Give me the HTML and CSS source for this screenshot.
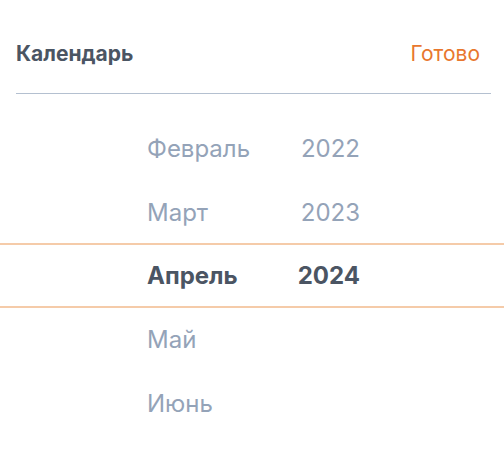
FILE: index.html
```html
<!DOCTYPE html>
<html lang="ru">
<head>
<meta charset="utf-8">
<link rel="stylesheet" href="styles.css">
</head>
<body>
<div class="sheet">
  <header class="header">
    <span class="title">Календарь</span>
    <span class="done">Готово</span>
  </header>
  <div class="picker">
    <div class="row"><span class="month">Февраль</span><span class="year">2022</span></div>
    <div class="row"><span class="month">Март</span><span class="year">2023</span></div>
    <div class="row selected"><span class="month">Апрель</span><span class="year">2024</span></div>
    <div class="row"><span class="month">Май</span><span class="year"></span></div>
    <div class="row"><span class="month">Июнь</span><span class="year"></span></div>
  </div>
</div>
</body>
</html>
```
FILE: styles.css
```css
* { box-sizing: border-box; }
html, body { margin: 0; padding: 0; background: #ffffff; }
body { font-family: Inter, "Noto Sans", sans-serif; width: 504px; height: 458px; overflow: hidden; }
.header {
  display: flex;
  justify-content: space-between;
  align-items: center;
  margin: 0 13px 0 16px;
  padding: 42px 11px 27px 0;
  line-height: 24px;
  border-bottom: 1px solid #b4c0d0;
}
.title { font-size: 21px; font-weight: 700; color: #4b5563; }
.done { font-size: 21px; font-weight: 400; color: #e8772e; }
.picker { margin-top: 22px; }
.row {
  display: grid;
  grid-template-columns: 150px 63px;
  padding-left: 147px;
  align-items: center;
  height: 64px;
  font-size: 24px;
  color: #94a3b8;
}
.year { text-align: right; }
.selected {
  border-top: 2px solid #f5cba9;
  border-bottom: 2px solid #f5cba9;
  margin-top: -1px;
  height: 65px;
  color: #4b5563;
  font-weight: 700;
}
.selected + .row { margin-top: -1px; }
```
